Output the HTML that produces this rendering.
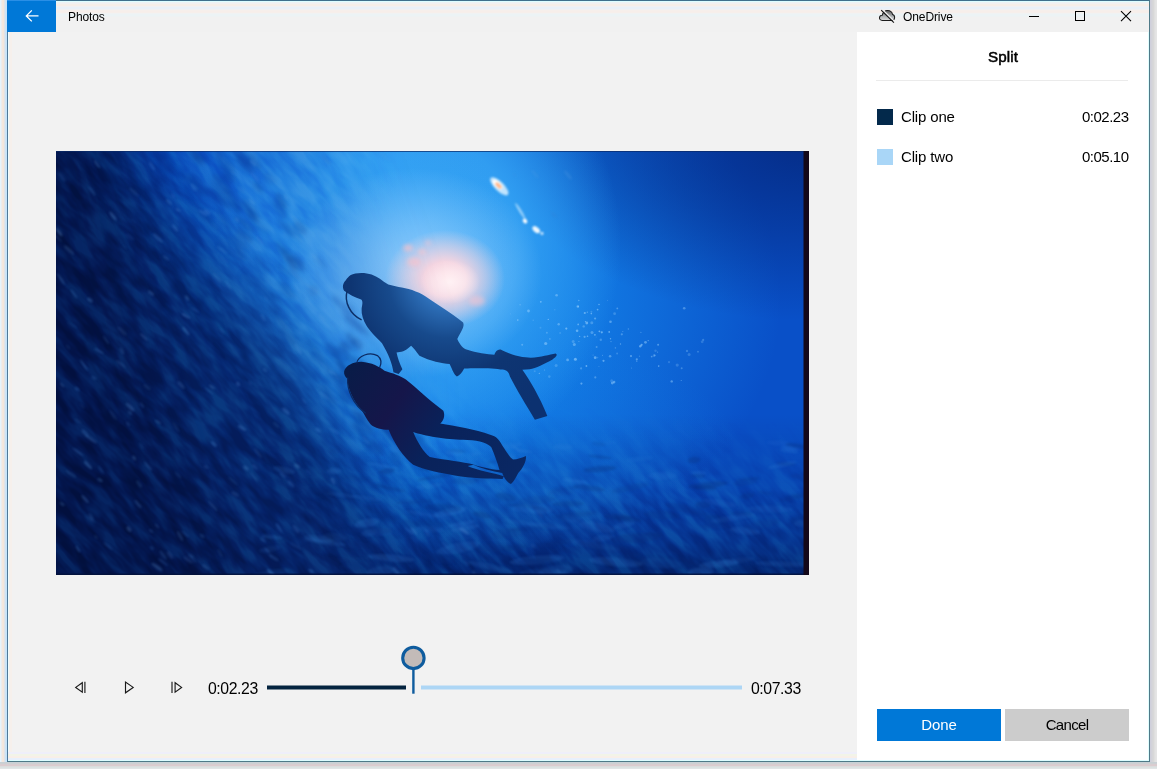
<!DOCTYPE html>
<html lang="en">
<head>
<meta charset="utf-8">
<title>Photos</title>
<style>
html,body{margin:0;padding:0;}
body{width:1157px;height:769px;overflow:hidden;position:relative;background:#fcfcfd;font-family:"Liberation Sans",sans-serif;color:#000;}
.abs{position:absolute;}
#shadowR{left:1150px;top:0;width:7px;height:769px;background:linear-gradient(to right,#cfcfdb 0px,#cfcfdb 1px,#d2d2da 1px,#d2d2da 2px,#d5d5d8 2px,#d5d5d8 3px,#d8d8d8 3px,#d8d8d8 4px,#dedede 4px,#dedede 5px,#e3e3e3 5px,#e3e3e3 6px,#e5e5e5 6px,#e5e5e5 7px);}
#shadowB{left:0;top:762px;width:1157px;height:7px;background:linear-gradient(to bottom,#c8d0d4 0px,#c8d0d4 1px,#cdd0d3 1px,#cdd0d3 2px,#d8cdd0 2px,#d8cdd0 3px,#dccccf 3px,#dccccf 4px,#dbdcdc 4px,#dbdcdc 5px,#dbe2e2 5px,#dbe2e2 6px,#e2e5e6 6px,#e2e5e6 7px);}
#shadowL{left:0;top:0;width:7px;height:769px;background:linear-gradient(to right,#e6f4fc 0px,#e6f4fc 1px,#ececee 1px,#ececee 2px,#f3e8de 2px,#f3e8de 3px,#f3e6dc 3px,#f3e6dc 4px,#e0e3e8 4px,#e0e3e8 5px,#cde4f6 5px,#cde4f6 6px,#c4e3fb 6px,#c4e3fb 7px);}
#win{left:7px;top:0;width:1143px;height:762px;background:#f2f2f2;box-sizing:border-box;border:1px solid #4f7a88;border-top-color:#3f708c;border-left-color:#4f7898;}
#titlebar{left:8px;top:1px;width:1141px;height:31px;background:linear-gradient(to bottom,#dcfdff 0px,#dcfdff 1px,#eef2f4 1px,#eef2f4 2px,#f1f1f1 2px,#f1f1f1 3px,#f6eee8 3px,#f6eee8 4px,#f6eee8 4px,#f6eee8 5px,#f0f0f2 5px,#f0f0f2 6px,#e9f0f8 6px,#e9f0f8 7px,#e9f0f8 7px,#e9f0f8 8px,#f0f0f2 8px,#f0f0f2 9px,#f6efeb 9px,#f6efeb 10px,#f7eeea 10px,#f7eeea 11px,#f6efeb 11px,#f6efeb 12px,#f0f2f3 12px,#f0f2f3 13px,#ecf3f5 13px,#ecf3f5 14px,#ecf3f5 14px,#ecf3f5 15px,#eef2f3 15px,#eef2f3 16px,#f1f1f1 16px,#f1f1f1 17px),#f1f1f1;}
#back{left:7px;top:0;width:49px;height:32px;background:#0078d7;border-top:1px solid #2a8fe6;box-sizing:border-box;}
#title{left:67.8px;top:10px;font-size:12px;line-height:14px;white-space:nowrap;letter-spacing:-0.12px;}
#od{left:902.8px;top:10px;font-size:12px;line-height:14px;white-space:nowrap;letter-spacing:-0.1px;}
#side{left:857px;top:32px;width:292px;height:729px;background:#fff;}
#split{left:857px;width:292px;top:48px;text-align:center;font-weight:normal;-webkit-text-stroke:0.5px #000;font-size:15.2px;line-height:18px;letter-spacing:0.12px;}
#divider{left:876px;top:80px;width:252px;height:1px;background:#ebebeb;}
.sw{width:16px;height:16px;left:877px;}
.clip{left:900.6px;font-size:15px;line-height:18px;white-space:nowrap;letter-spacing:-0.16px;}
.dur{right:28.6px;font-size:15px;line-height:18px;white-space:nowrap;letter-spacing:-0.5px;}
.btn{top:709px;width:124px;height:32px;font-size:15px;line-height:32px;text-align:center;}
#video{left:56px;top:151px;width:753px;height:424px;background:#0a4aa8;overflow:hidden;}
.time{font-size:15.8px;line-height:18px;white-space:nowrap;letter-spacing:-0.42px;}
.clip,.dur,.time,#title,#od,#split,.btn{will-change:transform;}
</style>
</head>
<body>
<div id="shadowL" class="abs"></div>
<div id="shadowR" class="abs"></div>
<div id="shadowB" class="abs"></div>
<div id="win" class="abs"></div>
<div class="abs" style="left:8px;top:32px;width:4px;height:729px;background:linear-gradient(to right,#eefcff 0,#eefcff 1px,#f6f0ec 1px,#f6f0ec 4px)"></div>
<div class="abs" style="left:8px;top:752px;width:1141px;height:9px;background:linear-gradient(to bottom,#efeffa 0,#efeffa 2px,#f2f4e8 2px,#f2f4e8 4px,#f8efe8 4px,#f8efe8 6px,#e8f0fc 6px,#e8f0fc 8px,#dcfdff 8px,#dcfdff 9px)"></div>
<div id="titlebar" class="abs"></div>
<div id="back" class="abs">
<svg width="48" height="31" viewBox="0 0 48 31" style="display:block;margin-left:1px"><path d="M23.8 9.4 L18.3 14.9 L23.8 20.4 M18.5 14.9 H30.5" fill="none" stroke="#fff" stroke-width="1.3"/></svg>
</div>
<div id="title" class="abs">Photos</div>
<svg class="abs" style="left:877px;top:8px" width="20" height="16" viewBox="0 0 20 16">
<defs><linearGradient id="cg" x1="0" y1="0" x2="0" y2="1"><stop offset="0" stop-color="#5e5e5e"/><stop offset="0.55" stop-color="#a8abad"/><stop offset="1" stop-color="#dcdcdc"/></linearGradient></defs>
<path d="M5.3 12.4 C3.2 12.4 2.3 11 2.5 9.6 C2.7 8.2 3.8 7.2 5.2 7.3 C5.6 4.6 8 2.4 10.6 2.5 C13.4 2.6 15.2 4.6 15.6 6.6 C16.9 7 17.7 8.4 17.6 9.8 C17.5 11.4 16.5 12.4 15.2 12.4 Z" fill="url(#cg)" stroke="#1c1c1c" stroke-width="1.05"/>
<path d="M5.1 1.3 L17.8 13.8" stroke="#f1f1f1" stroke-width="1.3"/>
<path d="M4.2 2.2 L16.9 14.7" stroke="#111" stroke-width="1.1"/>
</svg>
<div id="od" class="abs">OneDrive</div>
<svg class="abs" style="left:1020px;top:1px" width="129" height="31" viewBox="0 0 129 31">
<path d="M9 15.5 H19" stroke="#000" stroke-width="1"/>
<rect x="55.5" y="10.5" width="9" height="9" fill="none" stroke="#000" stroke-width="1"/>
<path d="M101 10.2 L111 20.2 M111 10.2 L101 20.2" stroke="#000" stroke-width="1.1"/>
</svg>

<div id="side" class="abs"></div>
<div class="abs" style="left:857px;top:760px;width:292px;height:1px;background:#dcfdff"></div>
<div class="abs" style="left:1148px;top:32px;width:1px;height:729px;background:#dffeff"></div>
<div id="split" class="abs">Split</div>
<div id="divider" class="abs"></div>
<div class="abs sw" style="top:109px;background:#03294b"></div>
<div class="abs clip" style="top:108px">Clip one</div>
<div class="abs dur" style="top:108px">0:02.23</div>
<div class="abs sw" style="top:149px;background:#a9d6f7"></div>
<div class="abs clip" style="top:148px">Clip two</div>
<div class="abs dur" style="top:148px">0:05.10</div>
<div class="abs btn" style="left:877px;background:#0078d7;color:#fff;letter-spacing:-0.15px">Done</div>
<div class="abs btn" style="left:1005px;background:#ccc;color:#000;letter-spacing:-0.68px">Cancel</div>

<div id="video" class="abs">
<svg width="753" height="424" viewBox="0 0 753 424" style="display:block">
<defs>
<radialGradient id="rBig"><stop offset="0" stop-color="#1484ea" stop-opacity="1"/><stop offset="0.4" stop-color="#1484ea" stop-opacity="0.85"/><stop offset="0.75" stop-color="#1484ea" stop-opacity="0.35"/><stop offset="1" stop-color="#1484ea" stop-opacity="0"/></radialGradient>
<radialGradient id="rMid"><stop offset="0" stop-color="#36a4f4" stop-opacity="1"/><stop offset="0.5" stop-color="#36a4f4" stop-opacity="0.85"/><stop offset="1" stop-color="#36a4f4" stop-opacity="0"/></radialGradient>
<radialGradient id="rIn"><stop offset="0" stop-color="#a8d8ff" stop-opacity="0.85"/><stop offset="0.5" stop-color="#a8d8ff" stop-opacity="0.45"/><stop offset="1" stop-color="#a8d8ff" stop-opacity="0"/></radialGradient>
<radialGradient id="rSun"><stop offset="0" stop-color="#ffd6de" stop-opacity="1"/><stop offset="0.35" stop-color="#ffd6de" stop-opacity="0.92"/><stop offset="0.7" stop-color="#ffd6de" stop-opacity="0.45"/><stop offset="1" stop-color="#ffd6de" stop-opacity="0"/></radialGradient>
<radialGradient id="rCore"><stop offset="0" stop-color="#fff6f8" stop-opacity="0.85"/><stop offset="0.5" stop-color="#fff6f8" stop-opacity="0.5"/><stop offset="1" stop-color="#fff6f8" stop-opacity="0"/></radialGradient>
<radialGradient id="rTR"><stop offset="0" stop-color="#04267c" stop-opacity="0.85"/><stop offset="0.5" stop-color="#04267c" stop-opacity="0.45"/><stop offset="1" stop-color="#04267c" stop-opacity="0"/></radialGradient>
<linearGradient id="gL" gradientUnits="userSpaceOnUse" x1="-50" y1="300" x2="404" y2="91">
<stop offset="0" stop-color="#031448" stop-opacity="0.9"/>
<stop offset="0.25" stop-color="#041a54" stop-opacity="0.6"/>
<stop offset="0.5" stop-color="#041a54" stop-opacity="0.15"/>
<stop offset="0.7" stop-color="#041a54" stop-opacity="0"/>
</linearGradient>
<linearGradient id="gB" x1="0" y1="0" x2="0" y2="1">
<stop offset="0.62" stop-color="#031c5c" stop-opacity="0"/>
<stop offset="0.8" stop-color="#031c5c" stop-opacity="0.22"/>
<stop offset="0.92" stop-color="#031c5c" stop-opacity="0.5"/>
<stop offset="1" stop-color="#031c5c" stop-opacity="0.8"/>
</linearGradient>
<filter color-interpolation-filters="sRGB" id="turb" x="0" y="0" width="100%" height="100%"><feTurbulence type="fractalNoise" baseFrequency="0.028 0.085" numOctaves="3" seed="11"/><feColorMatrix type="matrix" values="2.2 0 0 0 -0.6  2.2 0 0 0 -0.6  2.2 0 0 0 -0.6  0 0 0 0 1"/></filter>
<radialGradient id="mk2" gradientUnits="userSpaceOnUse" cx="392" cy="127" r="150"><stop offset="0" stop-color="#000" stop-opacity="1"/><stop offset="0.5" stop-color="#000" stop-opacity="1"/><stop offset="1" stop-color="#000" stop-opacity="0"/></radialGradient>
<mask id="sunmask"><g filter="url(#b30)"><path d="M-100,-100 L300,-100 L300,120 L400,310 L900,330 L900,560 L-100,560 Z" fill="#fff"/></g><circle cx="392" cy="127" r="150" fill="url(#mk2)"/></mask>
<filter color-interpolation-filters="sRGB" id="b2"><feGaussianBlur stdDeviation="2"/></filter><filter color-interpolation-filters="sRGB" id="b30" x="-50%" y="-50%" width="200%" height="200%"><feGaussianBlur stdDeviation="32"/></filter>
<filter color-interpolation-filters="sRGB" id="b1"><feGaussianBlur stdDeviation="0.8"/></filter><filter color-interpolation-filters="sRGB" id="b05"><feGaussianBlur stdDeviation="0.45"/></filter>
<radialGradient id="dv1" gradientUnits="userSpaceOnUse" cx="567" cy="87" r="720">
<stop offset="0" stop-color="#5a9cdc"/><stop offset="0.18" stop-color="#2f72bc"/><stop offset="0.4" stop-color="#174a8c"/><stop offset="0.65" stop-color="#0e3572"/><stop offset="1" stop-color="#0c3170"/>
</radialGradient>
<linearGradient id="dv2" gradientUnits="userSpaceOnUse" x1="80" y1="120" x2="900" y2="680">
<stop offset="0" stop-color="#081c48"/><stop offset="0.3" stop-color="#15164a"/><stop offset="0.55" stop-color="#09225a"/><stop offset="1" stop-color="#0a2864"/>
</linearGradient>
</defs>
<rect width="753" height="424" fill="#0950c8"/>
<ellipse cx="385" cy="150" rx="340" ry="275" fill="url(#rBig)"/>
<ellipse cx="753" cy="-10" rx="310" ry="180" fill="url(#rTR)"/>
<ellipse cx="450" cy="295" rx="230" ry="110" fill="url(#rBig)" opacity="0.28"/>
<rect width="753" height="424" fill="url(#gB)"/>
<ellipse cx="360" cy="95" rx="205" ry="225" fill="url(#rMid)"/>
<ellipse cx="280" cy="30" rx="210" ry="120" transform="rotate(35 280 30)" fill="url(#rMid)" opacity="0.4"/>
<g filter="url(#b30)"><path d="M-150,-120 L10,-120 L80,0 L150,100 L235,200 L285,300 L330,424 L350,560 L-150,560 Z" fill="#062468" opacity="0.93"/></g>
<g filter="url(#b30)"><path d="M-150,-120 L35,-120 L55,0 L70,100 L110,250 L175,424 L210,560 L-150,560 Z" fill="#031244" opacity="0.75"/></g>
<ellipse cx="358" cy="122" rx="128" ry="105" fill="url(#rIn)"/>
<ellipse cx="389" cy="128" rx="60" ry="49" fill="url(#rSun)"/>
<ellipse cx="394" cy="131" rx="30" ry="22" fill="url(#rCore)"/>
<g filter="url(#b2)" fill="#ffc4cc"><ellipse cx="352" cy="97" rx="5" ry="3.5" opacity="0.7"/><ellipse cx="366" cy="101" rx="4" ry="3" opacity="0.6"/><ellipse cx="358" cy="111" rx="7" ry="4.5" opacity="0.65"/><ellipse cx="372" cy="92" rx="3" ry="2.4" opacity="0.5"/><ellipse cx="421" cy="150" rx="8" ry="5" opacity="0.5"/></g>
<g mask="url(#sunmask)" style="mix-blend-mode:soft-light" opacity="0.3"><rect x="-300" y="-300" width="1400" height="1100" transform="rotate(48 376 212)" filter="url(#turb)"/></g>
<g filter="url(#b30)"><path d="M60,-60 L250,-60 L290,40 L330,150 L340,340 L285,300 L235,200 L150,100 Z" fill="#0a44ac" opacity="0.22"/></g>
<g filter="url(#b2)"><ellipse cx="289" cy="221" rx="16.3" ry="2.6" transform="rotate(58 289 221)" fill="#06348c" opacity="0.28"/><ellipse cx="202" cy="120" rx="15.5" ry="2.1" transform="rotate(52 202 120)" fill="#06348c" opacity="0.12"/><ellipse cx="337" cy="241" rx="14.1" ry="3.1" transform="rotate(41 337 241)" fill="#06348c" opacity="0.19"/><ellipse cx="330" cy="289" rx="13.9" ry="4.6" transform="rotate(36 330 289)" fill="#06348c" opacity="0.12"/><ellipse cx="277" cy="226" rx="10.3" ry="3.0" transform="rotate(46 277 226)" fill="#06348c" opacity="0.17"/><ellipse cx="330" cy="277" rx="17.8" ry="4.4" transform="rotate(47 330 277)" fill="#06348c" opacity="0.29"/><ellipse cx="331" cy="227" rx="7.6" ry="2.9" transform="rotate(37 331 227)" fill="#06348c" opacity="0.12"/><ellipse cx="315" cy="280" rx="9.8" ry="3.8" transform="rotate(59 315 280)" fill="#06348c" opacity="0.16"/><ellipse cx="169" cy="17" rx="14.8" ry="2.1" transform="rotate(54 169 17)" fill="#06348c" opacity="0.20"/><ellipse cx="207" cy="137" rx="17.2" ry="4.1" transform="rotate(55 207 137)" fill="#06348c" opacity="0.15"/><ellipse cx="319" cy="297" rx="9.6" ry="3.5" transform="rotate(44 319 297)" fill="#06348c" opacity="0.26"/><ellipse cx="231" cy="139" rx="11.0" ry="3.9" transform="rotate(52 231 139)" fill="#06348c" opacity="0.19"/><ellipse cx="237" cy="80" rx="13.0" ry="2.6" transform="rotate(51 237 80)" fill="#06348c" opacity="0.12"/><ellipse cx="172" cy="21" rx="12.9" ry="4.1" transform="rotate(53 172 21)" fill="#06348c" opacity="0.13"/><ellipse cx="311" cy="292" rx="7.3" ry="4.9" transform="rotate(59 311 292)" fill="#06348c" opacity="0.21"/><ellipse cx="113" cy="11" rx="13.6" ry="3.6" transform="rotate(60 113 11)" fill="#06348c" opacity="0.22"/><ellipse cx="346" cy="252" rx="6.9" ry="4.9" transform="rotate(56 346 252)" fill="#06348c" opacity="0.29"/><ellipse cx="153" cy="70" rx="14.4" ry="2.0" transform="rotate(42 153 70)" fill="#06348c" opacity="0.29"/><ellipse cx="145" cy="61" rx="15.5" ry="4.9" transform="rotate(42 145 61)" fill="#06348c" opacity="0.18"/><ellipse cx="141" cy="6" rx="10.0" ry="3.2" transform="rotate(60 141 6)" fill="#06348c" opacity="0.25"/><ellipse cx="189" cy="73" rx="12.5" ry="3.1" transform="rotate(39 189 73)" fill="#06348c" opacity="0.26"/><ellipse cx="347" cy="270" rx="16.8" ry="3.9" transform="rotate(41 347 270)" fill="#06348c" opacity="0.21"/><ellipse cx="364" cy="309" rx="14.8" ry="5.0" transform="rotate(56 364 309)" fill="#06348c" opacity="0.24"/><ellipse cx="164" cy="4" rx="6.4" ry="4.1" transform="rotate(45 164 4)" fill="#06348c" opacity="0.22"/><ellipse cx="284" cy="212" rx="14.0" ry="3.4" transform="rotate(49 284 212)" fill="#06348c" opacity="0.21"/><ellipse cx="277" cy="199" rx="10.1" ry="3.6" transform="rotate(44 277 199)" fill="#06348c" opacity="0.27"/><ellipse cx="331" cy="237" rx="10.3" ry="2.2" transform="rotate(59 331 237)" fill="#06348c" opacity="0.17"/><ellipse cx="301" cy="193" rx="6.9" ry="4.4" transform="rotate(52 301 193)" fill="#06348c" opacity="0.29"/><ellipse cx="292" cy="244" rx="16.1" ry="4.6" transform="rotate(44 292 244)" fill="#06348c" opacity="0.23"/><ellipse cx="293" cy="158" rx="6.8" ry="4.3" transform="rotate(44 293 158)" fill="#06348c" opacity="0.16"/><ellipse cx="162" cy="41" rx="14.1" ry="2.5" transform="rotate(52 162 41)" fill="#06348c" opacity="0.15"/><ellipse cx="363" cy="291" rx="13.8" ry="4.7" transform="rotate(43 363 291)" fill="#06348c" opacity="0.19"/><ellipse cx="323" cy="273" rx="10.9" ry="4.1" transform="rotate(44 323 273)" fill="#06348c" opacity="0.19"/><ellipse cx="284" cy="203" rx="9.6" ry="4.0" transform="rotate(42 284 203)" fill="#06348c" opacity="0.17"/><ellipse cx="208" cy="142" rx="13.6" ry="4.2" transform="rotate(39 208 142)" fill="#06348c" opacity="0.21"/><ellipse cx="106" cy="10" rx="13.9" ry="3.9" transform="rotate(48 106 10)" fill="#06348c" opacity="0.26"/><ellipse cx="195" cy="63" rx="6.0" ry="2.8" transform="rotate(50 195 63)" fill="#06348c" opacity="0.18"/><ellipse cx="282" cy="151" rx="9.1" ry="2.8" transform="rotate(46 282 151)" fill="#06348c" opacity="0.21"/><ellipse cx="218" cy="158" rx="7.5" ry="4.9" transform="rotate(42 218 158)" fill="#06348c" opacity="0.26"/><ellipse cx="350" cy="285" rx="10.5" ry="2.1" transform="rotate(54 350 285)" fill="#06348c" opacity="0.29"/><ellipse cx="238" cy="121" rx="9.1" ry="2.7" transform="rotate(56 238 121)" fill="#06348c" opacity="0.14"/><ellipse cx="301" cy="175" rx="16.2" ry="3.7" transform="rotate(37 301 175)" fill="#06348c" opacity="0.16"/><ellipse cx="304" cy="280" rx="11.3" ry="3.2" transform="rotate(45 304 280)" fill="#06348c" opacity="0.29"/><ellipse cx="295" cy="188" rx="7.3" ry="3.7" transform="rotate(58 295 188)" fill="#06348c" opacity="0.25"/><ellipse cx="265" cy="111" rx="8.1" ry="2.2" transform="rotate(45 265 111)" fill="#06348c" opacity="0.14"/><ellipse cx="274" cy="247" rx="8.8" ry="2.6" transform="rotate(49 274 247)" fill="#06348c" opacity="0.29"/><ellipse cx="188" cy="84" rx="10.6" ry="3.4" transform="rotate(37 188 84)" fill="#06348c" opacity="0.27"/><ellipse cx="231" cy="186" rx="12.0" ry="4.5" transform="rotate(40 231 186)" fill="#06348c" opacity="0.20"/><ellipse cx="302" cy="265" rx="10.0" ry="4.6" transform="rotate(49 302 265)" fill="#06348c" opacity="0.25"/><ellipse cx="303" cy="273" rx="10.9" ry="2.2" transform="rotate(51 303 273)" fill="#06348c" opacity="0.18"/><ellipse cx="213" cy="27" rx="8.2" ry="3.6" transform="rotate(48 213 27)" fill="#06348c" opacity="0.14"/><ellipse cx="231" cy="104" rx="9.6" ry="3.2" transform="rotate(57 231 104)" fill="#06348c" opacity="0.24"/><ellipse cx="185" cy="91" rx="10.6" ry="3.3" transform="rotate(48 185 91)" fill="#06348c" opacity="0.17"/><ellipse cx="142" cy="34" rx="13.8" ry="4.8" transform="rotate(51 142 34)" fill="#06348c" opacity="0.25"/><ellipse cx="199" cy="11" rx="10.1" ry="3.4" transform="rotate(53 199 11)" fill="#06348c" opacity="0.24"/><ellipse cx="269" cy="239" rx="6.8" ry="4.9" transform="rotate(56 269 239)" fill="#06348c" opacity="0.13"/><ellipse cx="179" cy="55" rx="8.4" ry="2.6" transform="rotate(59 179 55)" fill="#06348c" opacity="0.23"/><ellipse cx="241" cy="109" rx="8.4" ry="2.6" transform="rotate(40 241 109)" fill="#06348c" opacity="0.27"/><ellipse cx="135" cy="34" rx="16.6" ry="4.4" transform="rotate(47 135 34)" fill="#06348c" opacity="0.12"/><ellipse cx="309" cy="217" rx="8.0" ry="2.7" transform="rotate(53 309 217)" fill="#06348c" opacity="0.25"/><ellipse cx="315" cy="249" rx="7.9" ry="4.3" transform="rotate(53 315 249)" fill="#06348c" opacity="0.21"/><ellipse cx="219" cy="146" rx="7.1" ry="2.2" transform="rotate(41 219 146)" fill="#06348c" opacity="0.27"/><ellipse cx="288" cy="220" rx="11.1" ry="4.6" transform="rotate(58 288 220)" fill="#06348c" opacity="0.14"/><ellipse cx="166" cy="35" rx="15.1" ry="4.6" transform="rotate(55 166 35)" fill="#06348c" opacity="0.25"/><ellipse cx="284" cy="228" rx="9.1" ry="3.6" transform="rotate(40 284 228)" fill="#06348c" opacity="0.29"/><ellipse cx="267" cy="212" rx="17.7" ry="3.0" transform="rotate(39 267 212)" fill="#06348c" opacity="0.17"/><ellipse cx="292" cy="195" rx="8.4" ry="2.4" transform="rotate(40 292 195)" fill="#06348c" opacity="0.18"/><ellipse cx="193" cy="129" rx="10.2" ry="4.0" transform="rotate(40 193 129)" fill="#06348c" opacity="0.24"/><ellipse cx="224" cy="169" rx="11.9" ry="2.1" transform="rotate(55 224 169)" fill="#06348c" opacity="0.28"/><ellipse cx="322" cy="295" rx="9.4" ry="2.9" transform="rotate(50 322 295)" fill="#06348c" opacity="0.26"/><ellipse cx="177" cy="48" rx="15.2" ry="4.3" transform="rotate(58 177 48)" fill="#06348c" opacity="0.22"/><ellipse cx="207" cy="78" rx="7.2" ry="2.0" transform="rotate(40 207 78)" fill="#06348c" opacity="0.15"/><ellipse cx="178" cy="91" rx="10.2" ry="3.4" transform="rotate(43 178 91)" fill="#06348c" opacity="0.19"/><ellipse cx="185" cy="4" rx="15.7" ry="4.2" transform="rotate(46 185 4)" fill="#06348c" opacity="0.25"/><ellipse cx="134" cy="29" rx="10.7" ry="2.1" transform="rotate(36 134 29)" fill="#06348c" opacity="0.22"/><ellipse cx="240" cy="113" rx="11.0" ry="4.5" transform="rotate(37 240 113)" fill="#06348c" opacity="0.25"/><ellipse cx="290" cy="231" rx="14.0" ry="2.3" transform="rotate(35 290 231)" fill="#06348c" opacity="0.24"/><ellipse cx="310" cy="267" rx="9.1" ry="2.3" transform="rotate(41 310 267)" fill="#06348c" opacity="0.15"/><ellipse cx="198" cy="69" rx="9.9" ry="2.7" transform="rotate(49 198 69)" fill="#06348c" opacity="0.13"/><ellipse cx="225" cy="50" rx="9.4" ry="3.7" transform="rotate(60 225 50)" fill="#06348c" opacity="0.28"/><ellipse cx="298" cy="224" rx="8.9" ry="2.3" transform="rotate(38 298 224)" fill="#06348c" opacity="0.13"/><ellipse cx="322" cy="242" rx="8.5" ry="4.2" transform="rotate(37 322 242)" fill="#06348c" opacity="0.15"/><ellipse cx="348" cy="251" rx="11.1" ry="3.9" transform="rotate(38 348 251)" fill="#06348c" opacity="0.22"/><ellipse cx="174" cy="14" rx="8.6" ry="2.7" transform="rotate(54 174 14)" fill="#06348c" opacity="0.21"/><ellipse cx="334" cy="248" rx="6.9" ry="3.0" transform="rotate(37 334 248)" fill="#06348c" opacity="0.16"/><ellipse cx="288" cy="249" rx="9.6" ry="2.3" transform="rotate(54 288 249)" fill="#06348c" opacity="0.23"/><ellipse cx="162" cy="47" rx="17.2" ry="4.4" transform="rotate(36 162 47)" fill="#06348c" opacity="0.26"/><ellipse cx="169" cy="29" rx="8.0" ry="4.4" transform="rotate(54 169 29)" fill="#06348c" opacity="0.16"/><ellipse cx="350" cy="288" rx="14.5" ry="2.2" transform="rotate(35 350 288)" fill="#06348c" opacity="0.28"/><ellipse cx="145" cy="7" rx="6.8" ry="3.8" transform="rotate(37 145 7)" fill="#06348c" opacity="0.28"/><ellipse cx="136" cy="1" rx="10.9" ry="4.0" transform="rotate(59 136 1)" fill="#06348c" opacity="0.22"/><ellipse cx="313" cy="251" rx="15.3" ry="3.5" transform="rotate(41 313 251)" fill="#06348c" opacity="0.24"/><ellipse cx="170" cy="96" rx="11.6" ry="4.4" transform="rotate(52 170 96)" fill="#06348c" opacity="0.15"/><ellipse cx="230" cy="105" rx="17.3" ry="3.5" transform="rotate(54 230 105)" fill="#06348c" opacity="0.23"/><ellipse cx="288" cy="197" rx="6.8" ry="4.3" transform="rotate(55 288 197)" fill="#06348c" opacity="0.26"/><ellipse cx="309" cy="272" rx="13.1" ry="3.7" transform="rotate(57 309 272)" fill="#06348c" opacity="0.22"/><ellipse cx="362" cy="286" rx="6.6" ry="4.0" transform="rotate(45 362 286)" fill="#06348c" opacity="0.23"/><ellipse cx="298" cy="245" rx="10.5" ry="4.8" transform="rotate(41 298 245)" fill="#06348c" opacity="0.24"/><ellipse cx="320" cy="243" rx="16.8" ry="3.3" transform="rotate(43 320 243)" fill="#06348c" opacity="0.17"/><ellipse cx="297" cy="170" rx="16.5" ry="3.4" transform="rotate(45 297 170)" fill="#06348c" opacity="0.17"/><ellipse cx="171" cy="27" rx="7.0" ry="3.2" transform="rotate(47 171 27)" fill="#06348c" opacity="0.13"/><ellipse cx="244" cy="77" rx="8.2" ry="4.7" transform="rotate(45 244 77)" fill="#06348c" opacity="0.22"/><ellipse cx="168" cy="70" rx="13.5" ry="3.1" transform="rotate(57 168 70)" fill="#06348c" opacity="0.19"/><ellipse cx="184" cy="103" rx="8.0" ry="3.1" transform="rotate(55 184 103)" fill="#06348c" opacity="0.28"/><ellipse cx="339" cy="308" rx="9.8" ry="4.6" transform="rotate(55 339 308)" fill="#06348c" opacity="0.23"/><ellipse cx="350" cy="257" rx="10.7" ry="2.0" transform="rotate(56 350 257)" fill="#06348c" opacity="0.14"/><ellipse cx="194" cy="60" rx="13.9" ry="4.2" transform="rotate(52 194 60)" fill="#06348c" opacity="0.30"/><ellipse cx="313" cy="221" rx="14.0" ry="2.4" transform="rotate(54 313 221)" fill="#06348c" opacity="0.17"/><ellipse cx="228" cy="119" rx="10.0" ry="2.8" transform="rotate(42 228 119)" fill="#06348c" opacity="0.17"/><ellipse cx="303" cy="214" rx="17.3" ry="4.4" transform="rotate(36 303 214)" fill="#06348c" opacity="0.24"/><ellipse cx="257" cy="140" rx="6.2" ry="4.6" transform="rotate(57 257 140)" fill="#06348c" opacity="0.14"/><ellipse cx="206" cy="113" rx="12.1" ry="2.5" transform="rotate(50 206 113)" fill="#06348c" opacity="0.20"/><ellipse cx="345" cy="300" rx="6.1" ry="4.8" transform="rotate(42 345 300)" fill="#06348c" opacity="0.15"/><ellipse cx="339" cy="289" rx="18.0" ry="2.5" transform="rotate(50 339 289)" fill="#06348c" opacity="0.30"/><ellipse cx="259" cy="199" rx="15.3" ry="2.1" transform="rotate(49 259 199)" fill="#06348c" opacity="0.19"/><ellipse cx="189" cy="13" rx="11.9" ry="4.9" transform="rotate(44 189 13)" fill="#06348c" opacity="0.28"/><ellipse cx="230" cy="78" rx="11.9" ry="2.1" transform="rotate(48 230 78)" fill="#06348c" opacity="0.28"/><ellipse cx="202" cy="36" rx="6.7" ry="2.9" transform="rotate(48 202 36)" fill="#06348c" opacity="0.24"/><ellipse cx="341" cy="284" rx="17.7" ry="4.3" transform="rotate(44 341 284)" fill="#06348c" opacity="0.24"/><ellipse cx="224" cy="58" rx="11.7" ry="3.9" transform="rotate(58 224 58)" fill="#06348c" opacity="0.19"/></g>
<g filter="url(#b1)"><ellipse cx="38" cy="227" rx="2.8" ry="1.3" transform="rotate(31 38 227)" fill="#4f8fd8" opacity="0.21"/><ellipse cx="125" cy="234" rx="5.0" ry="1.7" transform="rotate(49 125 234)" fill="#4f8fd8" opacity="0.24"/><ellipse cx="151" cy="61" rx="3.9" ry="1.6" transform="rotate(35 151 61)" fill="#5a9be0" opacity="0.24"/><ellipse cx="194" cy="232" rx="2.8" ry="1.0" transform="rotate(50 194 232)" fill="#3f7fcc" opacity="0.21"/><ellipse cx="242" cy="392" rx="3.6" ry="1.0" transform="rotate(53 242 392)" fill="#3f7fcc" opacity="0.14"/><ellipse cx="150" cy="416" rx="4.4" ry="1.6" transform="rotate(35 150 416)" fill="#4f8fd8" opacity="0.22"/><ellipse cx="36" cy="40" rx="5.6" ry="0.9" transform="rotate(52 36 40)" fill="#6aaae8" opacity="0.18"/><ellipse cx="12" cy="196" rx="3.0" ry="0.9" transform="rotate(53 12 196)" fill="#5a9be0" opacity="0.15"/><ellipse cx="207" cy="389" rx="3.2" ry="1.2" transform="rotate(38 207 389)" fill="#6aaae8" opacity="0.15"/><ellipse cx="498" cy="64" rx="3.5" ry="1.0" transform="rotate(45 498 64)" fill="#3f7fcc" opacity="0.24"/><ellipse cx="147" cy="62" rx="5.2" ry="1.1" transform="rotate(34 147 62)" fill="#4f8fd8" opacity="0.29"/><ellipse cx="207" cy="167" rx="4.3" ry="1.0" transform="rotate(60 207 167)" fill="#4f8fd8" opacity="0.21"/><ellipse cx="177" cy="22" rx="3.2" ry="0.9" transform="rotate(41 177 22)" fill="#5a9be0" opacity="0.13"/><ellipse cx="131" cy="147" rx="3.1" ry="1.6" transform="rotate(60 131 147)" fill="#6aaae8" opacity="0.21"/><ellipse cx="107" cy="404" rx="5.6" ry="1.7" transform="rotate(53 107 404)" fill="#4f8fd8" opacity="0.18"/><ellipse cx="277" cy="330" rx="3.5" ry="1.6" transform="rotate(60 277 330)" fill="#5a9be0" opacity="0.29"/><ellipse cx="426" cy="314" rx="4.8" ry="1.2" transform="rotate(31 426 314)" fill="#3f7fcc" opacity="0.13"/><ellipse cx="179" cy="343" rx="4.1" ry="1.8" transform="rotate(32 179 343)" fill="#6aaae8" opacity="0.14"/><ellipse cx="102" cy="87" rx="6.6" ry="1.6" transform="rotate(44 102 87)" fill="#4f8fd8" opacity="0.25"/><ellipse cx="202" cy="302" rx="6.5" ry="1.2" transform="rotate(49 202 302)" fill="#6aaae8" opacity="0.14"/><ellipse cx="241" cy="315" rx="3.2" ry="1.8" transform="rotate(31 241 315)" fill="#6aaae8" opacity="0.24"/><ellipse cx="182" cy="233" rx="2.6" ry="1.8" transform="rotate(49 182 233)" fill="#5a9be0" opacity="0.23"/><ellipse cx="110" cy="107" rx="3.6" ry="1.4" transform="rotate(38 110 107)" fill="#5a9be0" opacity="0.20"/><ellipse cx="32" cy="314" rx="5.5" ry="1.6" transform="rotate(46 32 314)" fill="#5a9be0" opacity="0.29"/><ellipse cx="277" cy="222" rx="4.5" ry="1.0" transform="rotate(30 277 222)" fill="#5a9be0" opacity="0.28"/><ellipse cx="74" cy="262" rx="2.8" ry="1.5" transform="rotate(46 74 262)" fill="#4f8fd8" opacity="0.22"/><ellipse cx="459" cy="24" rx="2.7" ry="0.9" transform="rotate(44 459 24)" fill="#4f8fd8" opacity="0.13"/><ellipse cx="230" cy="260" rx="4.8" ry="1.5" transform="rotate(44 230 260)" fill="#6aaae8" opacity="0.23"/><ellipse cx="233" cy="177" rx="3.9" ry="1.5" transform="rotate(43 233 177)" fill="#3f7fcc" opacity="0.16"/><ellipse cx="408" cy="380" rx="5.7" ry="1.5" transform="rotate(34 408 380)" fill="#6aaae8" opacity="0.30"/><ellipse cx="114" cy="404" rx="4.7" ry="1.8" transform="rotate(55 114 404)" fill="#6aaae8" opacity="0.15"/><ellipse cx="185" cy="39" rx="4.0" ry="1.3" transform="rotate(51 185 39)" fill="#3f7fcc" opacity="0.20"/><ellipse cx="410" cy="412" rx="3.7" ry="0.8" transform="rotate(53 410 412)" fill="#5a9be0" opacity="0.17"/><ellipse cx="95" cy="380" rx="2.6" ry="0.9" transform="rotate(38 95 380)" fill="#5a9be0" opacity="0.24"/><ellipse cx="35" cy="366" rx="4.0" ry="1.4" transform="rotate(58 35 366)" fill="#5a9be0" opacity="0.17"/><ellipse cx="22" cy="301" rx="6.9" ry="1.1" transform="rotate(35 22 301)" fill="#3f7fcc" opacity="0.31"/><ellipse cx="418" cy="422" rx="2.6" ry="1.3" transform="rotate(59 418 422)" fill="#5a9be0" opacity="0.22"/><ellipse cx="210" cy="147" rx="3.1" ry="0.9" transform="rotate(52 210 147)" fill="#5a9be0" opacity="0.17"/><ellipse cx="29" cy="282" rx="4.8" ry="1.8" transform="rotate(48 29 282)" fill="#4f8fd8" opacity="0.26"/><ellipse cx="137" cy="408" rx="5.0" ry="1.0" transform="rotate(59 137 408)" fill="#3f7fcc" opacity="0.18"/><ellipse cx="95" cy="142" rx="3.8" ry="1.5" transform="rotate(37 95 142)" fill="#4f8fd8" opacity="0.28"/><ellipse cx="137" cy="38" rx="2.7" ry="0.8" transform="rotate(39 137 38)" fill="#5a9be0" opacity="0.17"/><ellipse cx="78" cy="307" rx="2.7" ry="1.6" transform="rotate(57 78 307)" fill="#5a9be0" opacity="0.25"/><ellipse cx="22" cy="270" rx="4.2" ry="1.3" transform="rotate(32 22 270)" fill="#5a9be0" opacity="0.12"/><ellipse cx="278" cy="280" rx="5.8" ry="1.1" transform="rotate(32 278 280)" fill="#5a9be0" opacity="0.17"/><ellipse cx="120" cy="276" rx="6.3" ry="0.9" transform="rotate(57 120 276)" fill="#4f8fd8" opacity="0.18"/><ellipse cx="321" cy="273" rx="3.2" ry="1.1" transform="rotate(52 321 273)" fill="#5a9be0" opacity="0.18"/><ellipse cx="6" cy="26" rx="5.5" ry="1.5" transform="rotate(50 6 26)" fill="#3f7fcc" opacity="0.18"/><ellipse cx="242" cy="198" rx="6.5" ry="1.0" transform="rotate(59 242 198)" fill="#4f8fd8" opacity="0.31"/><ellipse cx="477" cy="395" rx="2.9" ry="1.5" transform="rotate(38 477 395)" fill="#3f7fcc" opacity="0.19"/><ellipse cx="461" cy="298" rx="6.5" ry="1.3" transform="rotate(31 461 298)" fill="#6aaae8" opacity="0.12"/><ellipse cx="196" cy="51" rx="4.0" ry="1.1" transform="rotate(42 196 51)" fill="#5a9be0" opacity="0.31"/><ellipse cx="371" cy="382" rx="4.2" ry="1.2" transform="rotate(60 371 382)" fill="#3f7fcc" opacity="0.24"/><ellipse cx="15" cy="323" rx="6.4" ry="1.4" transform="rotate(36 15 323)" fill="#6aaae8" opacity="0.14"/><ellipse cx="66" cy="200" rx="3.8" ry="1.5" transform="rotate(59 66 200)" fill="#5a9be0" opacity="0.17"/><ellipse cx="156" cy="236" rx="3.3" ry="1.0" transform="rotate(36 156 236)" fill="#6aaae8" opacity="0.30"/><ellipse cx="91" cy="236" rx="4.2" ry="1.6" transform="rotate(36 91 236)" fill="#6aaae8" opacity="0.12"/><ellipse cx="199" cy="316" rx="3.7" ry="1.6" transform="rotate(45 199 316)" fill="#3f7fcc" opacity="0.23"/><ellipse cx="65" cy="213" rx="6.4" ry="1.0" transform="rotate(38 65 213)" fill="#6aaae8" opacity="0.17"/><ellipse cx="66" cy="180" rx="6.1" ry="1.8" transform="rotate(45 66 180)" fill="#6aaae8" opacity="0.13"/><ellipse cx="57" cy="65" rx="5.6" ry="1.7" transform="rotate(52 57 65)" fill="#6aaae8" opacity="0.25"/><ellipse cx="44" cy="329" rx="3.1" ry="1.4" transform="rotate(31 44 329)" fill="#5a9be0" opacity="0.26"/><ellipse cx="227" cy="324" rx="3.9" ry="1.7" transform="rotate(36 227 324)" fill="#4f8fd8" opacity="0.17"/><ellipse cx="5" cy="128" rx="6.8" ry="1.4" transform="rotate(57 5 128)" fill="#5a9be0" opacity="0.22"/><ellipse cx="101" cy="375" rx="2.9" ry="1.0" transform="rotate(43 101 375)" fill="#6aaae8" opacity="0.19"/><ellipse cx="18" cy="143" rx="5.6" ry="1.0" transform="rotate(54 18 143)" fill="#4f8fd8" opacity="0.27"/><ellipse cx="107" cy="411" rx="6.2" ry="1.0" transform="rotate(37 107 411)" fill="#3f7fcc" opacity="0.27"/><ellipse cx="57" cy="264" rx="6.5" ry="1.3" transform="rotate(57 57 264)" fill="#5a9be0" opacity="0.13"/><ellipse cx="479" cy="23" rx="5.2" ry="1.2" transform="rotate(51 479 23)" fill="#6aaae8" opacity="0.16"/><ellipse cx="96" cy="397" rx="2.6" ry="1.5" transform="rotate(41 96 397)" fill="#3f7fcc" opacity="0.19"/><ellipse cx="230" cy="46" rx="2.9" ry="1.2" transform="rotate(57 230 46)" fill="#5a9be0" opacity="0.23"/><ellipse cx="198" cy="326" rx="6.1" ry="0.9" transform="rotate(51 198 326)" fill="#6aaae8" opacity="0.16"/><ellipse cx="16" cy="174" rx="6.0" ry="0.8" transform="rotate(31 16 174)" fill="#4f8fd8" opacity="0.13"/><ellipse cx="13" cy="99" rx="6.8" ry="1.8" transform="rotate(42 13 99)" fill="#6aaae8" opacity="0.17"/><ellipse cx="158" cy="293" rx="3.6" ry="1.7" transform="rotate(44 158 293)" fill="#4f8fd8" opacity="0.28"/><ellipse cx="266" cy="166" rx="4.3" ry="1.4" transform="rotate(44 266 166)" fill="#5a9be0" opacity="0.23"/><ellipse cx="138" cy="36" rx="4.7" ry="1.5" transform="rotate(43 138 36)" fill="#6aaae8" opacity="0.17"/><ellipse cx="240" cy="378" rx="4.9" ry="1.6" transform="rotate(53 240 378)" fill="#3f7fcc" opacity="0.28"/><ellipse cx="153" cy="240" rx="5.8" ry="1.0" transform="rotate(37 153 240)" fill="#5a9be0" opacity="0.17"/><ellipse cx="146" cy="385" rx="2.8" ry="1.1" transform="rotate(37 146 385)" fill="#4f8fd8" opacity="0.23"/><ellipse cx="340" cy="420" rx="4.6" ry="1.6" transform="rotate(55 340 420)" fill="#4f8fd8" opacity="0.30"/><ellipse cx="26" cy="255" rx="3.4" ry="0.9" transform="rotate(45 26 255)" fill="#3f7fcc" opacity="0.16"/><ellipse cx="403" cy="282" rx="5.4" ry="1.5" transform="rotate(40 403 282)" fill="#3f7fcc" opacity="0.13"/><ellipse cx="74" cy="86" rx="5.2" ry="1.5" transform="rotate(36 74 86)" fill="#3f7fcc" opacity="0.12"/><ellipse cx="41" cy="13" rx="4.7" ry="1.2" transform="rotate(54 41 13)" fill="#5a9be0" opacity="0.25"/><ellipse cx="85" cy="295" rx="3.8" ry="1.1" transform="rotate(59 85 295)" fill="#3f7fcc" opacity="0.18"/><ellipse cx="211" cy="399" rx="3.2" ry="0.9" transform="rotate(33 211 399)" fill="#3f7fcc" opacity="0.24"/><ellipse cx="240" cy="69" rx="5.0" ry="1.4" transform="rotate(57 240 69)" fill="#3f7fcc" opacity="0.14"/><ellipse cx="181" cy="69" rx="2.8" ry="1.2" transform="rotate(53 181 69)" fill="#5a9be0" opacity="0.28"/><ellipse cx="157" cy="355" rx="6.6" ry="1.1" transform="rotate(48 157 355)" fill="#4f8fd8" opacity="0.25"/><ellipse cx="83" cy="333" rx="4.3" ry="1.6" transform="rotate(55 83 333)" fill="#5a9be0" opacity="0.16"/><ellipse cx="22" cy="398" rx="4.1" ry="0.9" transform="rotate(59 22 398)" fill="#5a9be0" opacity="0.28"/><ellipse cx="21" cy="238" rx="2.7" ry="1.6" transform="rotate(34 21 238)" fill="#3f7fcc" opacity="0.24"/><ellipse cx="130" cy="165" rx="4.8" ry="1.0" transform="rotate(30 130 165)" fill="#6aaae8" opacity="0.32"/><ellipse cx="122" cy="324" rx="4.6" ry="1.0" transform="rotate(44 122 324)" fill="#5a9be0" opacity="0.14"/><ellipse cx="262" cy="279" rx="3.1" ry="1.7" transform="rotate(39 262 279)" fill="#4f8fd8" opacity="0.26"/><ellipse cx="28" cy="214" rx="6.8" ry="0.9" transform="rotate(56 28 214)" fill="#4f8fd8" opacity="0.32"/><ellipse cx="101" cy="416" rx="6.8" ry="1.7" transform="rotate(35 101 416)" fill="#5a9be0" opacity="0.28"/><ellipse cx="34" cy="149" rx="3.2" ry="1.7" transform="rotate(38 34 149)" fill="#5a9be0" opacity="0.28"/><ellipse cx="132" cy="409" rx="5.2" ry="1.4" transform="rotate(37 132 409)" fill="#5a9be0" opacity="0.19"/><ellipse cx="353" cy="380" rx="6.0" ry="0.9" transform="rotate(46 353 380)" fill="#3f7fcc" opacity="0.25"/><ellipse cx="358" cy="380" rx="4.9" ry="1.7" transform="rotate(52 358 380)" fill="#6aaae8" opacity="0.19"/><ellipse cx="92" cy="315" rx="6.2" ry="1.1" transform="rotate(49 92 315)" fill="#3f7fcc" opacity="0.32"/><ellipse cx="381" cy="317" rx="3.8" ry="1.4" transform="rotate(43 381 317)" fill="#4f8fd8" opacity="0.19"/><ellipse cx="69" cy="96" rx="2.6" ry="0.8" transform="rotate(41 69 96)" fill="#3f7fcc" opacity="0.14"/><ellipse cx="278" cy="175" rx="3.1" ry="1.2" transform="rotate(55 278 175)" fill="#4f8fd8" opacity="0.15"/><ellipse cx="78" cy="41" rx="6.4" ry="1.6" transform="rotate(42 78 41)" fill="#4f8fd8" opacity="0.17"/><ellipse cx="29" cy="348" rx="5.2" ry="1.4" transform="rotate(48 29 348)" fill="#6aaae8" opacity="0.22"/><ellipse cx="129" cy="383" rx="4.9" ry="1.2" transform="rotate(37 129 383)" fill="#4f8fd8" opacity="0.13"/><ellipse cx="6" cy="234" rx="3.1" ry="1.0" transform="rotate(48 6 234)" fill="#6aaae8" opacity="0.22"/><ellipse cx="161" cy="127" rx="6.5" ry="1.6" transform="rotate(51 161 127)" fill="#6aaae8" opacity="0.12"/><ellipse cx="117" cy="45" rx="2.7" ry="1.1" transform="rotate(52 117 45)" fill="#3f7fcc" opacity="0.26"/><ellipse cx="124" cy="385" rx="5.6" ry="1.5" transform="rotate(59 124 385)" fill="#4f8fd8" opacity="0.21"/><ellipse cx="40" cy="386" rx="2.6" ry="0.9" transform="rotate(58 40 386)" fill="#5a9be0" opacity="0.19"/><ellipse cx="72" cy="273" rx="2.8" ry="0.8" transform="rotate(56 72 273)" fill="#5a9be0" opacity="0.27"/><ellipse cx="34" cy="368" rx="6.7" ry="0.9" transform="rotate(36 34 368)" fill="#4f8fd8" opacity="0.14"/><ellipse cx="45" cy="319" rx="4.6" ry="0.9" transform="rotate(54 45 319)" fill="#3f7fcc" opacity="0.25"/><ellipse cx="166" cy="180" rx="3.7" ry="1.1" transform="rotate(51 166 180)" fill="#3f7fcc" opacity="0.19"/><ellipse cx="150" cy="316" rx="2.6" ry="1.3" transform="rotate(33 150 316)" fill="#4f8fd8" opacity="0.21"/><ellipse cx="1" cy="86" rx="6.9" ry="0.8" transform="rotate(45 1 86)" fill="#5a9be0" opacity="0.22"/><ellipse cx="268" cy="245" rx="6.2" ry="1.7" transform="rotate(37 268 245)" fill="#4f8fd8" opacity="0.15"/><ellipse cx="255" cy="420" rx="3.0" ry="1.1" transform="rotate(33 255 420)" fill="#4f8fd8" opacity="0.31"/><ellipse cx="220" cy="274" rx="3.9" ry="1.2" transform="rotate(46 220 274)" fill="#5a9be0" opacity="0.15"/><ellipse cx="358" cy="257" rx="5.1" ry="1.3" transform="rotate(56 358 257)" fill="#3f7fcc" opacity="0.21"/><ellipse cx="88" cy="186" rx="5.1" ry="0.9" transform="rotate(44 88 186)" fill="#5a9be0" opacity="0.30"/><ellipse cx="135" cy="405" rx="3.2" ry="1.5" transform="rotate(36 135 405)" fill="#5a9be0" opacity="0.15"/><ellipse cx="102" cy="271" rx="3.4" ry="1.2" transform="rotate(31 102 271)" fill="#6aaae8" opacity="0.20"/><ellipse cx="74" cy="256" rx="5.8" ry="1.7" transform="rotate(43 74 256)" fill="#6aaae8" opacity="0.23"/><ellipse cx="119" cy="77" rx="4.4" ry="1.1" transform="rotate(51 119 77)" fill="#5a9be0" opacity="0.30"/><ellipse cx="130" cy="180" rx="5.3" ry="1.2" transform="rotate(50 130 180)" fill="#5a9be0" opacity="0.31"/><ellipse cx="6" cy="353" rx="3.0" ry="1.1" transform="rotate(37 6 353)" fill="#5a9be0" opacity="0.26"/><ellipse cx="213" cy="402" rx="5.6" ry="1.2" transform="rotate(53 213 402)" fill="#3f7fcc" opacity="0.14"/><ellipse cx="199" cy="26" rx="6.6" ry="1.4" transform="rotate(50 199 26)" fill="#4f8fd8" opacity="0.24"/><ellipse cx="204" cy="90" rx="6.0" ry="1.6" transform="rotate(49 204 90)" fill="#5a9be0" opacity="0.21"/><ellipse cx="215" cy="422" rx="5.4" ry="1.6" transform="rotate(44 215 422)" fill="#5a9be0" opacity="0.28"/><ellipse cx="139" cy="159" rx="4.4" ry="1.0" transform="rotate(30 139 159)" fill="#3f7fcc" opacity="0.26"/><ellipse cx="186" cy="277" rx="4.7" ry="1.4" transform="rotate(33 186 277)" fill="#5a9be0" opacity="0.30"/><ellipse cx="483" cy="362" rx="6.2" ry="1.7" transform="rotate(54 483 362)" fill="#3f7fcc" opacity="0.15"/><ellipse cx="329" cy="6" rx="6.8" ry="1.5" transform="rotate(38 329 6)" fill="#5a9be0" opacity="0.14"/><ellipse cx="235" cy="333" rx="4.3" ry="1.3" transform="rotate(48 235 333)" fill="#4f8fd8" opacity="0.26"/><ellipse cx="122" cy="59" rx="2.8" ry="1.3" transform="rotate(34 122 59)" fill="#6aaae8" opacity="0.22"/><ellipse cx="86" cy="254" rx="3.2" ry="1.1" transform="rotate(51 86 254)" fill="#3f7fcc" opacity="0.22"/><ellipse cx="218" cy="407" rx="5.4" ry="1.4" transform="rotate(31 218 407)" fill="#3f7fcc" opacity="0.24"/><ellipse cx="252" cy="321" rx="3.5" ry="1.2" transform="rotate(34 252 321)" fill="#3f7fcc" opacity="0.14"/><ellipse cx="177" cy="330" rx="6.6" ry="1.1" transform="rotate(40 177 330)" fill="#4f8fd8" opacity="0.17"/><ellipse cx="172" cy="134" rx="5.1" ry="1.4" transform="rotate(54 172 134)" fill="#6aaae8" opacity="0.13"/><ellipse cx="3" cy="81" rx="5.2" ry="1.5" transform="rotate(54 3 81)" fill="#6aaae8" opacity="0.30"/><ellipse cx="310" cy="289" rx="5.5" ry="1.3" transform="rotate(53 310 289)" fill="#5a9be0" opacity="0.14"/><ellipse cx="52" cy="395" rx="6.4" ry="0.9" transform="rotate(39 52 395)" fill="#3f7fcc" opacity="0.26"/><ellipse cx="96" cy="15" rx="5.0" ry="1.4" transform="rotate(57 96 15)" fill="#4f8fd8" opacity="0.22"/><ellipse cx="35" cy="288" rx="7.0" ry="1.5" transform="rotate(35 35 288)" fill="#4f8fd8" opacity="0.27"/><ellipse cx="43" cy="200" rx="5.3" ry="1.2" transform="rotate(30 43 200)" fill="#4f8fd8" opacity="0.25"/><ellipse cx="113" cy="51" rx="3.7" ry="1.4" transform="rotate(44 113 51)" fill="#4f8fd8" opacity="0.27"/><ellipse cx="190" cy="317" rx="3.2" ry="1.6" transform="rotate(39 190 317)" fill="#6aaae8" opacity="0.23"/><ellipse cx="240" cy="395" rx="6.8" ry="1.5" transform="rotate(30 240 395)" fill="#4f8fd8" opacity="0.12"/><ellipse cx="164" cy="402" rx="4.6" ry="1.0" transform="rotate(59 164 402)" fill="#5a9be0" opacity="0.14"/><ellipse cx="223" cy="377" rx="5.6" ry="1.4" transform="rotate(57 223 377)" fill="#3f7fcc" opacity="0.28"/><ellipse cx="73" cy="378" rx="3.2" ry="1.8" transform="rotate(54 73 378)" fill="#6aaae8" opacity="0.23"/><ellipse cx="390" cy="395" rx="5.2" ry="1.5" transform="rotate(44 390 395)" fill="#3f7fcc" opacity="0.16"/><ellipse cx="281" cy="227" rx="2.8" ry="1.2" transform="rotate(46 281 227)" fill="#3f7fcc" opacity="0.17"/><ellipse cx="248" cy="250" rx="3.4" ry="1.0" transform="rotate(51 248 250)" fill="#3f7fcc" opacity="0.19"/><ellipse cx="209" cy="219" rx="2.7" ry="1.8" transform="rotate(41 209 219)" fill="#6aaae8" opacity="0.14"/><ellipse cx="270" cy="9" rx="7.0" ry="1.7" transform="rotate(45 270 9)" fill="#3f7fcc" opacity="0.23"/><ellipse cx="50" cy="189" rx="5.2" ry="0.9" transform="rotate(55 50 189)" fill="#5a9be0" opacity="0.19"/><ellipse cx="197" cy="12" rx="4.2" ry="1.5" transform="rotate(45 197 12)" fill="#4f8fd8" opacity="0.29"/><ellipse cx="166" cy="99" rx="6.6" ry="1.3" transform="rotate(35 166 99)" fill="#3f7fcc" opacity="0.29"/><ellipse cx="502" cy="420" rx="2.7" ry="1.1" transform="rotate(41 502 420)" fill="#4f8fd8" opacity="0.30"/><ellipse cx="512" cy="24" rx="5.9" ry="1.7" transform="rotate(50 512 24)" fill="#6aaae8" opacity="0.18"/><ellipse cx="168" cy="109" rx="4.7" ry="1.0" transform="rotate(37 168 109)" fill="#4f8fd8" opacity="0.15"/><ellipse cx="82" cy="353" rx="5.3" ry="1.2" transform="rotate(52 82 353)" fill="#4f8fd8" opacity="0.28"/><ellipse cx="709" cy="342" rx="7.0" ry="1.8" transform="rotate(11 709 342)" fill="#062c78" opacity="0.16"/><ellipse cx="264" cy="339" rx="11.5" ry="3.4" transform="rotate(-8 264 339)" fill="#062c78" opacity="0.28"/><ellipse cx="441" cy="310" rx="10.7" ry="1.9" transform="rotate(-11 441 310)" fill="#062c78" opacity="0.17"/><ellipse cx="642" cy="325" rx="7.5" ry="2.5" transform="rotate(-0 642 325)" fill="#062c78" opacity="0.21"/><ellipse cx="547" cy="396" rx="26.4" ry="3.9" transform="rotate(8 547 396)" fill="#062c78" opacity="0.26"/><ellipse cx="734" cy="348" rx="10.9" ry="2.3" transform="rotate(-6 734 348)" fill="#062c78" opacity="0.19"/><ellipse cx="289" cy="402" rx="28.2" ry="2.7" transform="rotate(3 289 402)" fill="#062c78" opacity="0.21"/><ellipse cx="481" cy="349" rx="19.2" ry="4.2" transform="rotate(-5 481 349)" fill="#062c78" opacity="0.13"/><ellipse cx="425" cy="327" rx="8.6" ry="3.5" transform="rotate(1 425 327)" fill="#062c78" opacity="0.15"/><ellipse cx="530" cy="401" rx="26.3" ry="4.6" transform="rotate(6 530 401)" fill="#062c78" opacity="0.14"/><ellipse cx="568" cy="374" rx="11.2" ry="2.9" transform="rotate(-12 568 374)" fill="#3c8ce0" opacity="0.14"/><ellipse cx="663" cy="413" rx="19.9" ry="3.5" transform="rotate(-5 663 413)" fill="#3c8ce0" opacity="0.19"/><ellipse cx="250" cy="345" rx="18.4" ry="2.0" transform="rotate(4 250 345)" fill="#062c78" opacity="0.22"/><ellipse cx="742" cy="295" rx="12.8" ry="2.3" transform="rotate(9 742 295)" fill="#062c78" opacity="0.29"/><ellipse cx="733" cy="300" rx="9.3" ry="1.8" transform="rotate(8 733 300)" fill="#3c8ce0" opacity="0.17"/><ellipse cx="677" cy="367" rx="22.9" ry="2.7" transform="rotate(-9 677 367)" fill="#3c8ce0" opacity="0.13"/><ellipse cx="214" cy="398" rx="11.3" ry="3.0" transform="rotate(-10 214 398)" fill="#3c8ce0" opacity="0.10"/><ellipse cx="372" cy="364" rx="23.5" ry="1.9" transform="rotate(10 372 364)" fill="#3c8ce0" opacity="0.11"/><ellipse cx="661" cy="375" rx="16.1" ry="2.7" transform="rotate(-1 661 375)" fill="#062c78" opacity="0.14"/><ellipse cx="298" cy="327" rx="12.5" ry="2.9" transform="rotate(6 298 327)" fill="#062c78" opacity="0.14"/><ellipse cx="686" cy="363" rx="11.2" ry="2.5" transform="rotate(4 686 363)" fill="#062c78" opacity="0.19"/><ellipse cx="722" cy="292" rx="11.9" ry="2.5" transform="rotate(2 722 292)" fill="#3c8ce0" opacity="0.08"/><ellipse cx="734" cy="297" rx="9.2" ry="2.0" transform="rotate(8 734 297)" fill="#3c8ce0" opacity="0.18"/><ellipse cx="510" cy="422" rx="16.4" ry="3.8" transform="rotate(1 510 422)" fill="#062c78" opacity="0.15"/><ellipse cx="574" cy="337" rx="19.2" ry="3.2" transform="rotate(-12 574 337)" fill="#062c78" opacity="0.15"/><ellipse cx="378" cy="317" rx="14.4" ry="1.9" transform="rotate(-2 378 317)" fill="#062c78" opacity="0.30"/><ellipse cx="450" cy="296" rx="16.1" ry="3.1" transform="rotate(-11 450 296)" fill="#3c8ce0" opacity="0.15"/><ellipse cx="705" cy="374" rx="18.8" ry="4.3" transform="rotate(-11 705 374)" fill="#062c78" opacity="0.14"/><ellipse cx="208" cy="322" rx="6.5" ry="1.7" transform="rotate(-4 208 322)" fill="#062c78" opacity="0.13"/><ellipse cx="727" cy="413" rx="27.9" ry="2.6" transform="rotate(2 727 413)" fill="#3c8ce0" opacity="0.13"/><ellipse cx="481" cy="409" rx="27.7" ry="4.2" transform="rotate(-5 481 409)" fill="#3c8ce0" opacity="0.17"/><ellipse cx="358" cy="351" rx="17.9" ry="2.3" transform="rotate(-3 358 351)" fill="#062c78" opacity="0.19"/><ellipse cx="690" cy="331" rx="13.0" ry="3.5" transform="rotate(-11 690 331)" fill="#062c78" opacity="0.15"/><ellipse cx="500" cy="420" rx="17.9" ry="5.6" transform="rotate(-8 500 420)" fill="#3c8ce0" opacity="0.12"/><ellipse cx="379" cy="326" rx="18.1" ry="2.0" transform="rotate(-11 379 326)" fill="#062c78" opacity="0.22"/><ellipse cx="533" cy="337" rx="16.0" ry="2.9" transform="rotate(8 533 337)" fill="#062c78" opacity="0.26"/><ellipse cx="487" cy="423" rx="24.1" ry="5.7" transform="rotate(-2 487 423)" fill="#3c8ce0" opacity="0.10"/><ellipse cx="311" cy="372" rx="12.5" ry="4.4" transform="rotate(-10 311 372)" fill="#3c8ce0" opacity="0.19"/><ellipse cx="748" cy="326" rx="14.7" ry="3.0" transform="rotate(5 748 326)" fill="#062c78" opacity="0.14"/><ellipse cx="426" cy="364" rx="9.4" ry="3.0" transform="rotate(12 426 364)" fill="#062c78" opacity="0.27"/><ellipse cx="354" cy="373" rx="9.7" ry="4.4" transform="rotate(5 354 373)" fill="#062c78" opacity="0.18"/><ellipse cx="394" cy="361" rx="17.1" ry="3.6" transform="rotate(-12 394 361)" fill="#3c8ce0" opacity="0.20"/><ellipse cx="409" cy="330" rx="13.8" ry="3.4" transform="rotate(-2 409 330)" fill="#062c78" opacity="0.16"/><ellipse cx="652" cy="334" rx="20.3" ry="3.1" transform="rotate(-6 652 334)" fill="#062c78" opacity="0.29"/><ellipse cx="690" cy="418" rx="9.9" ry="3.3" transform="rotate(10 690 418)" fill="#062c78" opacity="0.22"/><ellipse cx="372" cy="373" rx="15.4" ry="4.4" transform="rotate(5 372 373)" fill="#062c78" opacity="0.20"/><ellipse cx="222" cy="381" rx="16.2" ry="2.0" transform="rotate(-10 222 381)" fill="#062c78" opacity="0.19"/><ellipse cx="475" cy="377" rx="24.4" ry="2.4" transform="rotate(-7 475 377)" fill="#062c78" opacity="0.19"/><ellipse cx="622" cy="410" rx="21.2" ry="4.6" transform="rotate(6 622 410)" fill="#062c78" opacity="0.19"/><ellipse cx="402" cy="300" rx="8.8" ry="1.6" transform="rotate(4 402 300)" fill="#062c78" opacity="0.18"/><ellipse cx="714" cy="358" rx="23.1" ry="3.5" transform="rotate(1 714 358)" fill="#3c8ce0" opacity="0.10"/><ellipse cx="691" cy="345" rx="7.7" ry="3.1" transform="rotate(-9 691 345)" fill="#062c78" opacity="0.23"/><ellipse cx="598" cy="383" rx="8.3" ry="2.0" transform="rotate(5 598 383)" fill="#062c78" opacity="0.29"/><ellipse cx="419" cy="303" rx="5.5" ry="1.4" transform="rotate(-8 419 303)" fill="#3c8ce0" opacity="0.15"/><ellipse cx="679" cy="410" rx="19.6" ry="2.8" transform="rotate(-7 679 410)" fill="#3c8ce0" opacity="0.10"/><ellipse cx="485" cy="358" rx="7.7" ry="2.0" transform="rotate(11 485 358)" fill="#062c78" opacity="0.20"/><ellipse cx="437" cy="397" rx="21.3" ry="4.4" transform="rotate(2 437 397)" fill="#062c78" opacity="0.16"/><ellipse cx="351" cy="294" rx="12.0" ry="2.8" transform="rotate(11 351 294)" fill="#062c78" opacity="0.15"/><ellipse cx="543" cy="293" rx="7.3" ry="2.0" transform="rotate(6 543 293)" fill="#062c78" opacity="0.13"/><ellipse cx="331" cy="320" rx="8.0" ry="2.8" transform="rotate(-8 331 320)" fill="#062c78" opacity="0.28"/><ellipse cx="450" cy="346" rx="10.7" ry="4.0" transform="rotate(12 450 346)" fill="#062c78" opacity="0.24"/><ellipse cx="571" cy="368" rx="14.7" ry="3.0" transform="rotate(5 571 368)" fill="#062c78" opacity="0.28"/><ellipse cx="248" cy="313" rx="10.4" ry="1.4" transform="rotate(9 248 313)" fill="#062c78" opacity="0.19"/><ellipse cx="384" cy="407" rx="15.8" ry="4.4" transform="rotate(11 384 407)" fill="#062c78" opacity="0.28"/><ellipse cx="505" cy="342" rx="13.7" ry="2.5" transform="rotate(-2 505 342)" fill="#062c78" opacity="0.12"/><ellipse cx="643" cy="322" rx="7.7" ry="1.9" transform="rotate(1 643 322)" fill="#3c8ce0" opacity="0.15"/><ellipse cx="457" cy="397" rx="13.3" ry="3.3" transform="rotate(-7 457 397)" fill="#062c78" opacity="0.23"/><ellipse cx="519" cy="330" rx="12.9" ry="2.0" transform="rotate(9 519 330)" fill="#3c8ce0" opacity="0.19"/><ellipse cx="749" cy="370" rx="15.3" ry="4.8" transform="rotate(1 749 370)" fill="#062c78" opacity="0.21"/><ellipse cx="269" cy="391" rx="21.2" ry="2.4" transform="rotate(8 269 391)" fill="#3c8ce0" opacity="0.17"/><ellipse cx="216" cy="386" rx="10.9" ry="2.1" transform="rotate(5 216 386)" fill="#3c8ce0" opacity="0.17"/><ellipse cx="327" cy="315" rx="17.1" ry="1.6" transform="rotate(10 327 315)" fill="#3c8ce0" opacity="0.17"/><ellipse cx="306" cy="386" rx="9.9" ry="3.0" transform="rotate(8 306 386)" fill="#062c78" opacity="0.18"/><ellipse cx="664" cy="352" rx="17.0" ry="3.4" transform="rotate(9 664 352)" fill="#3c8ce0" opacity="0.10"/><ellipse cx="402" cy="397" rx="22.1" ry="5.1" transform="rotate(-11 402 397)" fill="#3c8ce0" opacity="0.14"/><ellipse cx="750" cy="344" rx="20.4" ry="1.9" transform="rotate(-5 750 344)" fill="#062c78" opacity="0.23"/><ellipse cx="321" cy="381" rx="15.4" ry="3.9" transform="rotate(-2 321 381)" fill="#3c8ce0" opacity="0.10"/><ellipse cx="606" cy="364" rx="18.0" ry="4.5" transform="rotate(2 606 364)" fill="#062c78" opacity="0.21"/><ellipse cx="486" cy="414" rx="23.2" ry="4.3" transform="rotate(10 486 414)" fill="#062c78" opacity="0.26"/><ellipse cx="560" cy="411" rx="27.1" ry="4.3" transform="rotate(5 560 411)" fill="#3c8ce0" opacity="0.16"/><ellipse cx="220" cy="333" rx="17.4" ry="2.4" transform="rotate(10 220 333)" fill="#062c78" opacity="0.25"/><ellipse cx="749" cy="372" rx="11.6" ry="3.5" transform="rotate(-4 749 372)" fill="#3c8ce0" opacity="0.13"/><ellipse cx="387" cy="357" rx="18.4" ry="4.1" transform="rotate(3 387 357)" fill="#062c78" opacity="0.24"/><ellipse cx="313" cy="380" rx="23.3" ry="4.4" transform="rotate(-0 313 380)" fill="#062c78" opacity="0.29"/><ellipse cx="654" cy="365" rx="10.4" ry="2.3" transform="rotate(7 654 365)" fill="#062c78" opacity="0.17"/><ellipse cx="730" cy="313" rx="10.0" ry="1.6" transform="rotate(3 730 313)" fill="#062c78" opacity="0.24"/><ellipse cx="468" cy="355" rx="18.4" ry="1.8" transform="rotate(5 468 355)" fill="#062c78" opacity="0.24"/><ellipse cx="584" cy="308" rx="14.1" ry="2.6" transform="rotate(-6 584 308)" fill="#3c8ce0" opacity="0.09"/><ellipse cx="434" cy="416" rx="23.5" ry="2.9" transform="rotate(12 434 416)" fill="#3c8ce0" opacity="0.13"/><ellipse cx="313" cy="382" rx="8.3" ry="3.5" transform="rotate(-11 313 382)" fill="#3c8ce0" opacity="0.12"/><ellipse cx="261" cy="331" rx="19.9" ry="2.0" transform="rotate(-1 261 331)" fill="#062c78" opacity="0.17"/><ellipse cx="507" cy="296" rx="10.3" ry="3.1" transform="rotate(-0 507 296)" fill="#3c8ce0" opacity="0.12"/><ellipse cx="606" cy="325" rx="14.9" ry="3.7" transform="rotate(-0 606 325)" fill="#3c8ce0" opacity="0.12"/><ellipse cx="398" cy="302" rx="8.6" ry="2.5" transform="rotate(6 398 302)" fill="#3c8ce0" opacity="0.16"/><ellipse cx="243" cy="390" rx="8.9" ry="3.3" transform="rotate(-9 243 390)" fill="#062c78" opacity="0.29"/><ellipse cx="489" cy="410" rx="23.1" ry="2.6" transform="rotate(5 489 410)" fill="#062c78" opacity="0.23"/><ellipse cx="409" cy="377" rx="14.2" ry="2.7" transform="rotate(-9 409 377)" fill="#3c8ce0" opacity="0.18"/><ellipse cx="339" cy="298" rx="6.3" ry="2.8" transform="rotate(10 339 298)" fill="#3c8ce0" opacity="0.13"/><ellipse cx="228" cy="319" rx="11.4" ry="3.1" transform="rotate(12 228 319)" fill="#3c8ce0" opacity="0.16"/><ellipse cx="278" cy="320" rx="7.7" ry="2.9" transform="rotate(-2 278 320)" fill="#3c8ce0" opacity="0.18"/><ellipse cx="464" cy="319" rx="10.7" ry="1.5" transform="rotate(3 464 319)" fill="#3c8ce0" opacity="0.14"/><ellipse cx="279" cy="300" rx="5.8" ry="2.7" transform="rotate(9 279 300)" fill="#062c78" opacity="0.12"/><ellipse cx="726" cy="314" rx="14.9" ry="2.2" transform="rotate(-12 726 314)" fill="#3c8ce0" opacity="0.16"/><ellipse cx="512" cy="353" rx="15.7" ry="3.1" transform="rotate(-2 512 353)" fill="#062c78" opacity="0.23"/><ellipse cx="285" cy="344" rx="15.9" ry="1.9" transform="rotate(7 285 344)" fill="#3c8ce0" opacity="0.12"/><ellipse cx="562" cy="366" rx="14.6" ry="2.9" transform="rotate(4 562 366)" fill="#062c78" opacity="0.28"/><ellipse cx="492" cy="375" rx="22.8" ry="2.6" transform="rotate(6 492 375)" fill="#3c8ce0" opacity="0.10"/><ellipse cx="518" cy="364" rx="23.3" ry="2.9" transform="rotate(-6 518 364)" fill="#062c78" opacity="0.17"/><ellipse cx="325" cy="420" rx="13.8" ry="5.0" transform="rotate(-7 325 420)" fill="#3c8ce0" opacity="0.16"/><ellipse cx="303" cy="380" rx="20.8" ry="2.7" transform="rotate(-1 303 380)" fill="#062c78" opacity="0.25"/><ellipse cx="605" cy="412" rx="20.9" ry="5.2" transform="rotate(4 605 412)" fill="#3c8ce0" opacity="0.10"/><ellipse cx="477" cy="358" rx="20.9" ry="4.4" transform="rotate(3 477 358)" fill="#3c8ce0" opacity="0.14"/><ellipse cx="453" cy="382" rx="18.0" ry="5.0" transform="rotate(-7 453 382)" fill="#062c78" opacity="0.14"/><ellipse cx="405" cy="373" rx="14.8" ry="2.1" transform="rotate(-11 405 373)" fill="#3c8ce0" opacity="0.19"/><ellipse cx="453" cy="306" rx="7.0" ry="3.2" transform="rotate(-10 453 306)" fill="#3c8ce0" opacity="0.10"/><ellipse cx="263" cy="388" rx="14.9" ry="3.2" transform="rotate(8 263 388)" fill="#3c8ce0" opacity="0.17"/><ellipse cx="206" cy="324" rx="9.3" ry="2.7" transform="rotate(1 206 324)" fill="#062c78" opacity="0.21"/><ellipse cx="649" cy="337" rx="11.7" ry="2.4" transform="rotate(2 649 337)" fill="#062c78" opacity="0.28"/><ellipse cx="333" cy="337" rx="16.7" ry="1.7" transform="rotate(12 333 337)" fill="#062c78" opacity="0.26"/><ellipse cx="468" cy="300" rx="8.2" ry="1.6" transform="rotate(10 468 300)" fill="#3c8ce0" opacity="0.16"/><ellipse cx="660" cy="369" rx="11.9" ry="4.8" transform="rotate(6 660 369)" fill="#062c78" opacity="0.20"/><ellipse cx="214" cy="423" rx="20.1" ry="4.1" transform="rotate(-11 214 423)" fill="#3c8ce0" opacity="0.09"/><ellipse cx="541" cy="376" rx="18.6" ry="4.5" transform="rotate(11 541 376)" fill="#3c8ce0" opacity="0.13"/><ellipse cx="326" cy="418" rx="20.3" ry="3.6" transform="rotate(1 326 418)" fill="#062c78" opacity="0.14"/><ellipse cx="544" cy="318" rx="16.5" ry="3.0" transform="rotate(-4 544 318)" fill="#062c78" opacity="0.29"/><ellipse cx="373" cy="335" rx="13.4" ry="2.1" transform="rotate(-6 373 335)" fill="#3c8ce0" opacity="0.15"/><ellipse cx="547" cy="387" rx="11.0" ry="3.3" transform="rotate(-10 547 387)" fill="#3c8ce0" opacity="0.12"/><ellipse cx="515" cy="368" rx="10.0" ry="3.9" transform="rotate(10 515 368)" fill="#3c8ce0" opacity="0.09"/><ellipse cx="310" cy="347" rx="15.7" ry="2.0" transform="rotate(7 310 347)" fill="#3c8ce0" opacity="0.11"/><ellipse cx="638" cy="309" rx="6.4" ry="3.3" transform="rotate(-4 638 309)" fill="#062c78" opacity="0.27"/><ellipse cx="335" cy="407" rx="23.5" ry="3.4" transform="rotate(5 335 407)" fill="#3c8ce0" opacity="0.19"/><ellipse cx="630" cy="358" rx="21.7" ry="4.0" transform="rotate(12 630 358)" fill="#062c78" opacity="0.16"/><ellipse cx="689" cy="380" rx="15.3" ry="3.2" transform="rotate(7 689 380)" fill="#3c8ce0" opacity="0.15"/><ellipse cx="279" cy="386" rx="12.9" ry="3.8" transform="rotate(4 279 386)" fill="#3c8ce0" opacity="0.09"/><ellipse cx="305" cy="414" rx="21.4" ry="3.4" transform="rotate(-4 305 414)" fill="#062c78" opacity="0.29"/><ellipse cx="580" cy="387" rx="25.4" ry="4.7" transform="rotate(-4 580 387)" fill="#062c78" opacity="0.28"/><ellipse cx="501" cy="392" rx="20.3" ry="2.9" transform="rotate(-12 501 392)" fill="#062c78" opacity="0.20"/><ellipse cx="691" cy="328" rx="13.1" ry="1.8" transform="rotate(-6 691 328)" fill="#062c78" opacity="0.14"/><ellipse cx="227" cy="300" rx="14.6" ry="2.4" transform="rotate(5 227 300)" fill="#062c78" opacity="0.17"/><ellipse cx="553" cy="292" rx="8.4" ry="1.3" transform="rotate(-4 553 292)" fill="#3c8ce0" opacity="0.08"/><ellipse cx="467" cy="372" rx="21.6" ry="2.4" transform="rotate(9 467 372)" fill="#3c8ce0" opacity="0.09"/><ellipse cx="537" cy="394" rx="27.5" ry="3.4" transform="rotate(11 537 394)" fill="#3c8ce0" opacity="0.08"/><ellipse cx="374" cy="378" rx="13.5" ry="3.2" transform="rotate(5 374 378)" fill="#3c8ce0" opacity="0.10"/><ellipse cx="210" cy="318" rx="12.7" ry="3.3" transform="rotate(-3 210 318)" fill="#062c78" opacity="0.18"/><ellipse cx="574" cy="406" rx="12.0" ry="5.5" transform="rotate(2 574 406)" fill="#062c78" opacity="0.23"/><ellipse cx="647" cy="354" rx="7.6" ry="3.5" transform="rotate(4 647 354)" fill="#062c78" opacity="0.25"/><ellipse cx="508" cy="338" rx="14.3" ry="2.3" transform="rotate(-6 508 338)" fill="#062c78" opacity="0.14"/><ellipse cx="645" cy="421" rx="12.7" ry="4.6" transform="rotate(-2 645 421)" fill="#3c8ce0" opacity="0.19"/><ellipse cx="544" cy="306" rx="12.0" ry="1.8" transform="rotate(7 544 306)" fill="#062c78" opacity="0.23"/><ellipse cx="606" cy="411" rx="27.0" ry="5.2" transform="rotate(7 606 411)" fill="#062c78" opacity="0.18"/></g>
<g filter="url(#b1)"><ellipse cx="443.3" cy="35.3" rx="12" ry="4.6" transform="rotate(45 443.3 35.3)" fill="#d8f0ff" opacity="0.85"/><ellipse cx="441.5" cy="33.5" rx="6.5" ry="3" transform="rotate(45 441.5 33.5)" fill="#ffffff"/><ellipse cx="442.5" cy="34.5" rx="4" ry="1.8" transform="rotate(45 442.5 34.5)" fill="#ffb58a"/><ellipse cx="464.3" cy="60" rx="9.5" ry="1.4" transform="rotate(58 464.3 60)" fill="#bfe6ff" opacity="0.7"/><ellipse cx="469" cy="70" rx="2.6" ry="2" transform="rotate(50 469 70)" fill="#ffffff"/><ellipse cx="480.2" cy="78.7" rx="4.4" ry="2.6" transform="rotate(40 480.2 78.7)" fill="#eef8ff"/><circle cx="486" cy="82.5" r="1.4" fill="#e6f4ff"/></g>
<g filter="url(#b05)"><circle cx="522.2" cy="173.4" r="0.9" fill="#9fd4ff" opacity="0.52"/><circle cx="518.3" cy="193.6" r="1.5" fill="#9fd4ff" opacity="0.45"/><circle cx="493.9" cy="187.9" r="0.7" fill="#9fd4ff" opacity="0.56"/><circle cx="575.0" cy="205.1" r="1.1" fill="#9fd4ff" opacity="0.46"/><circle cx="566.8" cy="180.5" r="0.6" fill="#9fd4ff" opacity="0.36"/><circle cx="530.8" cy="172.0" r="1.4" fill="#9fd4ff" opacity="0.54"/><circle cx="575.6" cy="216.9" r="0.5" fill="#9fd4ff" opacity="0.41"/><circle cx="527.7" cy="175.4" r="1.2" fill="#9fd4ff" opacity="0.34"/><circle cx="633.1" cy="203.4" r="1.5" fill="#9fd4ff" opacity="0.24"/><circle cx="472.5" cy="160.0" r="1.4" fill="#9fd4ff" opacity="0.48"/><circle cx="564.5" cy="193.0" r="0.7" fill="#9fd4ff" opacity="0.49"/><circle cx="538.9" cy="183.8" r="0.9" fill="#9fd4ff" opacity="0.54"/><circle cx="561.3" cy="157.4" r="0.9" fill="#9fd4ff" opacity="0.40"/><circle cx="493.3" cy="225.6" r="1.3" fill="#9fd4ff" opacity="0.26"/><circle cx="535.8" cy="171.7" r="1.5" fill="#9fd4ff" opacity="0.32"/><circle cx="555.7" cy="229.8" r="1.5" fill="#9fd4ff" opacity="0.23"/><circle cx="598.8" cy="204.4" r="0.8" fill="#9fd4ff" opacity="0.37"/><circle cx="556.3" cy="232.1" r="1.4" fill="#9fd4ff" opacity="0.47"/><circle cx="554.5" cy="187.8" r="0.7" fill="#9fd4ff" opacity="0.54"/><circle cx="541.6" cy="206.6" r="0.8" fill="#9fd4ff" opacity="0.21"/><circle cx="642.0" cy="200.7" r="0.9" fill="#9fd4ff" opacity="0.31"/><circle cx="484.8" cy="150.8" r="0.9" fill="#9fd4ff" opacity="0.56"/><circle cx="521.7" cy="155.5" r="1.2" fill="#9fd4ff" opacity="0.40"/><circle cx="464.1" cy="153.8" r="0.8" fill="#9fd4ff" opacity="0.34"/><circle cx="454.5" cy="162.8" r="0.6" fill="#9fd4ff" opacity="0.21"/><circle cx="517.2" cy="190.4" r="1.5" fill="#9fd4ff" opacity="0.29"/><circle cx="466.2" cy="193.7" r="1.0" fill="#9fd4ff" opacity="0.40"/><circle cx="599.5" cy="199.7" r="1.2" fill="#9fd4ff" opacity="0.21"/><circle cx="490.9" cy="181.8" r="1.0" fill="#9fd4ff" opacity="0.32"/><circle cx="647.2" cy="188.9" r="1.1" fill="#9fd4ff" opacity="0.29"/><circle cx="461.8" cy="169.1" r="0.8" fill="#9fd4ff" opacity="0.59"/><circle cx="477.2" cy="169.3" r="0.7" fill="#9fd4ff" opacity="0.27"/><circle cx="553.2" cy="180.9" r="0.9" fill="#9fd4ff" opacity="0.58"/><circle cx="537.1" cy="204.0" r="0.6" fill="#9fd4ff" opacity="0.36"/><circle cx="584.3" cy="195.3" r="1.2" fill="#9fd4ff" opacity="0.55"/><circle cx="580.8" cy="208.3" r="1.1" fill="#9fd4ff" opacity="0.46"/><circle cx="539.3" cy="226.4" r="1.1" fill="#9fd4ff" opacity="0.37"/><circle cx="631.0" cy="199.9" r="1.2" fill="#9fd4ff" opacity="0.28"/><circle cx="523.6" cy="185.4" r="0.7" fill="#9fd4ff" opacity="0.50"/><circle cx="625.2" cy="229.5" r="0.5" fill="#9fd4ff" opacity="0.51"/><circle cx="558.6" cy="162.7" r="1.4" fill="#9fd4ff" opacity="0.28"/><circle cx="543.0" cy="153.5" r="0.8" fill="#9fd4ff" opacity="0.51"/><circle cx="613.0" cy="211.1" r="1.2" fill="#9fd4ff" opacity="0.21"/><circle cx="511.6" cy="208.9" r="1.4" fill="#9fd4ff" opacity="0.46"/><circle cx="539.1" cy="167.5" r="1.1" fill="#9fd4ff" opacity="0.45"/><circle cx="504.1" cy="182.0" r="0.9" fill="#9fd4ff" opacity="0.24"/><circle cx="535.4" cy="160.7" r="1.0" fill="#9fd4ff" opacity="0.21"/><circle cx="522.2" cy="155.5" r="0.9" fill="#9fd4ff" opacity="0.54"/><circle cx="478.7" cy="220.3" r="1.0" fill="#9fd4ff" opacity="0.23"/><circle cx="519.4" cy="208.3" r="1.5" fill="#9fd4ff" opacity="0.59"/><circle cx="572.4" cy="178.0" r="0.8" fill="#9fd4ff" opacity="0.36"/><circle cx="500.1" cy="214.6" r="1.5" fill="#9fd4ff" opacity="0.28"/><circle cx="525.4" cy="232.6" r="1.1" fill="#9fd4ff" opacity="0.51"/><circle cx="536.0" cy="181.5" r="1.5" fill="#9fd4ff" opacity="0.37"/><circle cx="554.1" cy="205.3" r="1.3" fill="#9fd4ff" opacity="0.41"/><circle cx="621.2" cy="214.1" r="1.6" fill="#9fd4ff" opacity="0.23"/><circle cx="545.8" cy="181.3" r="1.1" fill="#9fd4ff" opacity="0.57"/><circle cx="565.8" cy="183.3" r="1.1" fill="#9fd4ff" opacity="0.38"/><circle cx="551.6" cy="149.4" r="0.5" fill="#9fd4ff" opacity="0.28"/><circle cx="483.3" cy="222.4" r="0.6" fill="#9fd4ff" opacity="0.55"/><circle cx="585.6" cy="193.8" r="1.1" fill="#9fd4ff" opacity="0.57"/><circle cx="500.6" cy="144.3" r="1.3" fill="#9fd4ff" opacity="0.43"/><circle cx="522.8" cy="149.5" r="0.7" fill="#9fd4ff" opacity="0.46"/><circle cx="628.2" cy="157.3" r="1.3" fill="#9fd4ff" opacity="0.39"/><circle cx="584.9" cy="181.3" r="0.6" fill="#9fd4ff" opacity="0.40"/><circle cx="488.6" cy="210.4" r="1.4" fill="#9fd4ff" opacity="0.56"/><circle cx="598.1" cy="204.6" r="1.3" fill="#9fd4ff" opacity="0.29"/><circle cx="535.3" cy="162.6" r="0.8" fill="#9fd4ff" opacity="0.56"/><circle cx="540.6" cy="196.0" r="1.0" fill="#9fd4ff" opacity="0.36"/><circle cx="646.2" cy="190.8" r="1.4" fill="#9fd4ff" opacity="0.22"/><circle cx="484.5" cy="176.7" r="1.0" fill="#9fd4ff" opacity="0.22"/><circle cx="489.7" cy="192.5" r="1.6" fill="#9fd4ff" opacity="0.50"/><circle cx="555.0" cy="190.6" r="0.7" fill="#9fd4ff" opacity="0.41"/><circle cx="510.3" cy="177.6" r="1.1" fill="#9fd4ff" opacity="0.58"/><circle cx="472.0" cy="215.4" r="0.6" fill="#9fd4ff" opacity="0.21"/><circle cx="528.6" cy="185.8" r="1.1" fill="#9fd4ff" opacity="0.45"/><circle cx="554.5" cy="170.8" r="1.3" fill="#9fd4ff" opacity="0.46"/><circle cx="502.7" cy="173.3" r="1.2" fill="#9fd4ff" opacity="0.42"/><circle cx="547.5" cy="209.8" r="1.1" fill="#9fd4ff" opacity="0.53"/><circle cx="558.1" cy="231.1" r="1.3" fill="#9fd4ff" opacity="0.47"/><circle cx="601.6" cy="201.1" r="0.6" fill="#9fd4ff" opacity="0.41"/><circle cx="531.5" cy="185.3" r="0.8" fill="#9fd4ff" opacity="0.55"/><circle cx="559.4" cy="196.9" r="0.8" fill="#9fd4ff" opacity="0.32"/><circle cx="525.1" cy="217.4" r="1.1" fill="#9fd4ff" opacity="0.33"/><circle cx="546.5" cy="204.3" r="0.5" fill="#9fd4ff" opacity="0.47"/><circle cx="543.4" cy="180.3" r="0.9" fill="#9fd4ff" opacity="0.59"/><circle cx="592.2" cy="189.6" r="0.7" fill="#9fd4ff" opacity="0.50"/><circle cx="540.2" cy="186.1" r="0.5" fill="#9fd4ff" opacity="0.22"/><circle cx="531.3" cy="161.2" r="0.6" fill="#9fd4ff" opacity="0.56"/><circle cx="544.8" cy="188.7" r="1.2" fill="#9fd4ff" opacity="0.32"/><circle cx="539.2" cy="206.7" r="1.4" fill="#9fd4ff" opacity="0.54"/><circle cx="583.5" cy="205.3" r="0.7" fill="#9fd4ff" opacity="0.27"/><circle cx="602.1" cy="193.7" r="1.0" fill="#9fd4ff" opacity="0.45"/><circle cx="541.6" cy="158.6" r="0.9" fill="#9fd4ff" opacity="0.52"/><circle cx="595.7" cy="205.6" r="0.9" fill="#9fd4ff" opacity="0.42"/><circle cx="488.5" cy="219.0" r="0.5" fill="#9fd4ff" opacity="0.51"/><circle cx="542.9" cy="215.5" r="0.6" fill="#9fd4ff" opacity="0.26"/><circle cx="625.7" cy="217.3" r="1.0" fill="#9fd4ff" opacity="0.33"/><circle cx="561.1" cy="202.6" r="1.0" fill="#9fd4ff" opacity="0.28"/><circle cx="602.7" cy="215.1" r="0.8" fill="#9fd4ff" opacity="0.57"/><circle cx="589.5" cy="191.3" r="1.4" fill="#9fd4ff" opacity="0.45"/><circle cx="521.1" cy="179.8" r="1.3" fill="#9fd4ff" opacity="0.55"/><circle cx="529.4" cy="170.6" r="0.6" fill="#9fd4ff" opacity="0.58"/><circle cx="492.3" cy="168.4" r="0.7" fill="#9fd4ff" opacity="0.58"/><circle cx="530.4" cy="215.0" r="0.9" fill="#9fd4ff" opacity="0.58"/><circle cx="615.7" cy="230.4" r="1.2" fill="#9fd4ff" opacity="0.45"/><circle cx="498.8" cy="158.8" r="0.7" fill="#9fd4ff" opacity="0.23"/><circle cx="580.8" cy="210.2" r="0.6" fill="#9fd4ff" opacity="0.49"/><circle cx="522.9" cy="190.5" r="0.6" fill="#9fd4ff" opacity="0.42"/><circle cx="528.8" cy="162.0" r="1.1" fill="#9fd4ff" opacity="0.55"/></g>
<g filter="url(#b05)">
<g transform="translate(274,109) scale(0.208)">
<path fill="url(#dv1)" d="M100,72 C120,60 170,58 200,70 C230,80 250,100 280,118 L330,130 C370,135 420,150 460,175 C520,215 590,260 640,300 C650,320 625,350 612,380 C625,410 640,425 660,432 C700,445 760,455 790,455 C795,440 805,428 820,430 C850,445 900,465 940,468 C1000,475 1050,455 1085,450 C1095,455 1090,465 1070,478 C1030,500 990,520 960,525 L925,528 C955,570 1010,660 1045,750 L985,768 C945,700 895,620 865,560 C860,540 850,530 830,527 C790,520 700,518 645,522 C635,540 625,555 610,560 C595,550 590,530 575,500 C540,498 480,485 430,460 C415,440 400,420 390,412 C375,425 360,440 335,442 L320,445 C325,470 335,500 348,525 L330,548 L305,540 C300,500 280,450 250,400 C220,370 190,340 175,315 C160,290 150,260 152,235 C155,215 160,200 150,190 C120,180 90,165 68,148 C58,130 62,110 75,98 C85,85 90,78 100,72 Z"/>
<path fill="none" stroke="#0d3068" stroke-width="7" d="M82,150 C68,200 95,262 152,288"/>
</g>
<g transform="translate(274,189) scale(0.208)">
<path fill="url(#dv2)" fill-rule="evenodd" d="M68,150 C75,125 110,105 150,105 C200,108 240,130 262,148 C300,160 340,172 365,190 C410,225 470,285 545,340 C555,365 545,390 530,402 C600,412 700,432 770,455 C800,462 815,480 830,510 C850,540 865,565 880,575 C900,575 925,565 942,558 C945,585 925,620 905,640 C895,660 885,680 870,692 C850,685 838,665 828,640 C780,632 720,615 690,600 L662,606 C700,625 790,640 835,655 L830,668 C760,668 680,665 600,652 C540,640 450,625 400,600 C350,560 310,500 282,432 C250,430 215,425 195,405 C175,380 165,355 150,335 C110,290 85,230 82,185 C72,175 66,165 68,150 Z M400,442 C450,460 560,478 640,480 C700,482 750,490 775,515 C790,550 805,590 815,625 C770,620 720,610 690,598 C640,585 560,578 480,562 C450,540 420,490 400,442 Z"/>
<path fill="none" stroke="#0c2a62" stroke-width="6" d="M128,112 C135,75 190,55 228,75 C250,92 246,118 238,135"/>
<path fill="none" stroke="#0c2a62" stroke-width="6" d="M85,180 C80,240 112,312 172,352"/>
</g>
</g>

<rect x="0" y="0" width="753" height="1" fill="#0a2a66" opacity="0.7"/>
<rect x="0" y="422.5" width="753" height="1.5" fill="#04123a" opacity="0.8"/>
<rect x="747.5" y="0" width="5.5" height="424" fill="#14081a"/>
</svg>
</div>

<svg class="abs" style="left:60px;top:640px" width="760" height="70" viewBox="0 0 760 70">
<g fill="none" stroke="#1a1a1a" stroke-width="1.15" stroke-linejoin="miter">
<path d="M22.3 42.7 V52.1 L15.7 47.4 Z"/><path d="M24.9 41.8 V53"/>
<path d="M65.5 42 V52.8 L73.2 47.4 Z"/>
<path d="M112 41.8 V53"/><path d="M115.1 42.7 V52.1 L121.6 47.4 Z"/>
</g>
<rect x="207" y="45.5" width="139" height="4" fill="#04243f"/>
<rect x="361" y="45.5" width="321" height="4" fill="#add6f5"/>
<rect x="352.2" y="29" width="2.4" height="24.7" fill="#0f5c9e"/>
<circle cx="353.4" cy="17.9" r="10.7" fill="#c3bbb8" stroke="#0f5c9e" stroke-width="3.1"/>
</svg>
<div class="abs time" style="left:207.8px;top:680px">0:02.23</div>
<div class="abs time" style="left:750.6px;top:680px">0:07.33</div>
</body>
</html>
